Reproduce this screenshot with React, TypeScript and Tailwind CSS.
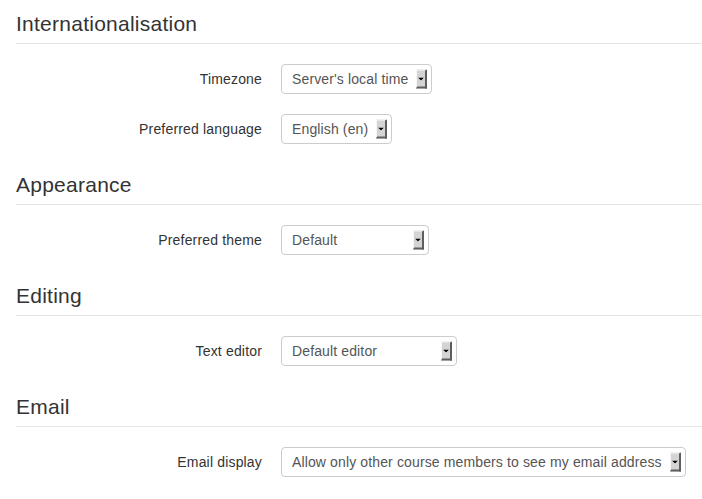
import React from "react";

type Field = {
  label: string;
  value: string;
  width: string;
};

type Section = {
  title: string;
  fields: Field[];
};

const sections: Section[] = [
  {
    title: "Internationalisation",
    fields: [
      { label: "Timezone", value: "Server's local time", width: "w-[151px]" },
      { label: "Preferred language", value: "English (en)", width: "w-[111px]" },
    ],
  },
  {
    title: "Appearance",
    fields: [{ label: "Preferred theme", value: "Default", width: "w-[148px]" }],
  },
  {
    title: "Editing",
    fields: [{ label: "Text editor", value: "Default editor", width: "w-[176px]" }],
  },
  {
    title: "Email",
    fields: [
      {
        label: "Email display",
        value: "Allow only other course members to see my email address",
        width: "w-[405px]",
      },
    ],
  },
];

// Old GTK-style dropdown button drawn over the select's right side.
function ArrowButton() {
  return (
    <span className="pointer-events-none absolute right-[5px] top-1/2 flex h-[19px] w-[11px] -translate-y-1/2 items-center justify-center border-t border-l border-t-[#f6f6f6] border-l-[#f6f6f6] border-r-2 border-b-2 border-r-[#5e5e5e] border-b-[#5e5e5e] bg-[#d4d4d4]">
      <svg width="6" height="3" viewBox="0 0 6 3" aria-hidden>
        <path d="M0 0h6L3 3z" fill="#000" />
      </svg>
    </span>
  );
}

function SelectField({ label, value, width }: Field) {
  return (
    <div className="mb-5 flex h-[30px] items-center">
      <label className="-mr-[1px] w-[246px] shrink-0 text-right text-[14px] tracking-[0.17px] text-[#333]">
        {label}
      </label>
      <div className={`relative ml-5 h-[30px] ${width}`}>
        <select
          defaultValue={value}
          className="h-full w-full appearance-none rounded-[4px] border border-[#ccc] bg-white pl-[10px] text-[14px] tracking-[0.13px] text-[#555] outline-none"
        >
          <option>{value}</option>
        </select>
        <ArrowButton />
      </div>
    </div>
  );
}

export default function App() {
  return (
    <div
      className="min-h-screen bg-white pt-[3px] pl-4"
      style={{ fontFamily: '"Liberation Sans", Arial, sans-serif' }}
    >
      {sections.map((s) => (
        <fieldset key={s.title}>
          <legend className="contents">
            <span className="mb-5 block h-[41px] border-b border-[#e5e5e5] pt-[1px] text-[21px] leading-[39px] tracking-[0.25px] text-[#333]">
              {s.title}
            </span>
          </legend>
          {s.fields.map((f) => (
            <SelectField key={f.label} {...f} />
          ))}
        </fieldset>
      ))}
    </div>
  );
}
